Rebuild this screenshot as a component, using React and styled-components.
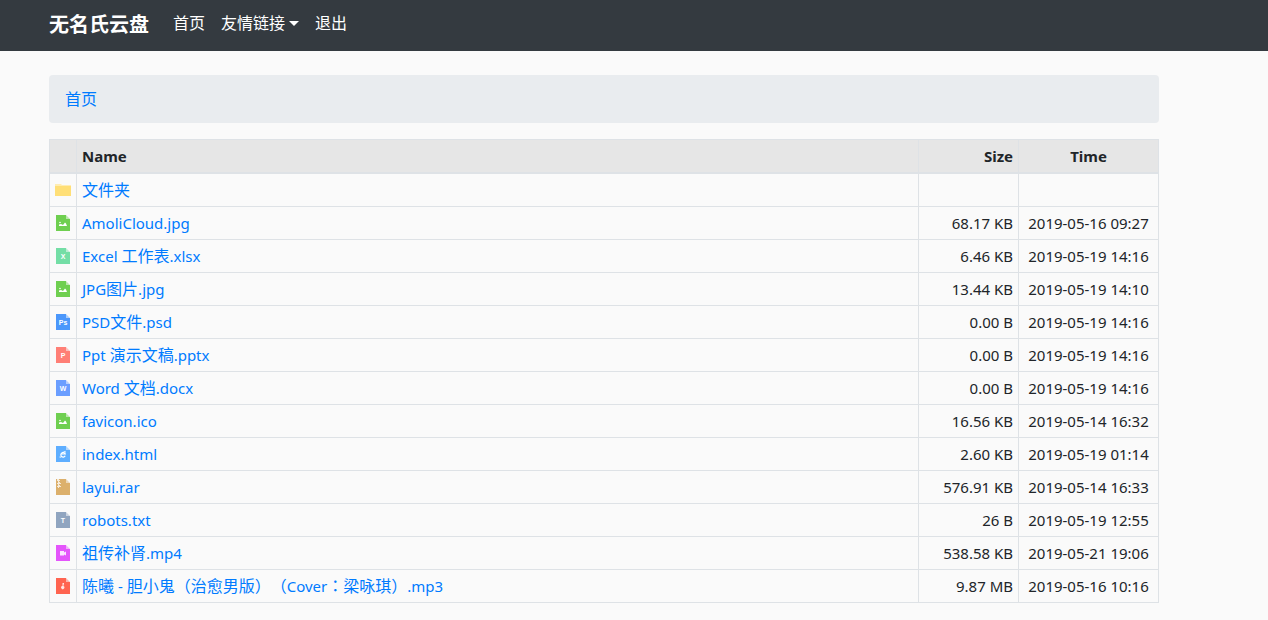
import React from "react";
import styled, { createGlobalStyle } from "styled-components";

const GlobalStyle = createGlobalStyle`
  *, *::before, *::after { box-sizing: border-box; }
  body {
    margin: 0;
    background: #fafafa;
    color: #212529;
    font-family: "Noto Sans", "Noto Sans CJK SC", sans-serif;
    font-size: 16px;
    line-height: 24px;
  }
`;

const Container = styled.div`
  max-width: 1159px;
  padding-left: 49px;
`;

const Navbar = styled.header`
  background: #343a40;
  padding: 3px 0 6px;
`;

const NavInner = styled(Container)`
  display: flex;
  align-items: flex-start;
`;

const Brand = styled.a`
  margin-right: 16px;
  padding-top: 2px;
  color: #fff;
  font-size: 20px;
  font-weight: 700;
  line-height: 40px;
  text-decoration: none;
`;

const NavList = styled.ul`
  display: flex;
  margin: 0;
  padding: 0;
  list-style: none;
`;

const NavLink = styled.a`
  display: flex;
  align-items: center;
  gap: 4px;
  padding: 8px;
  color: #fff;
  text-decoration: none;
`;

const Caret = styled.span`
  border: 5px solid transparent;
  border-top-color: #fff;
  border-bottom: 0;
`;

const Breadcrumb = styled.nav`
  margin: 24px 0 16px;
  padding: 12px 16px;
  border-radius: 4px;
  background: #e9ecef;
`;

const Link = styled.a`
  color: #007bff;
  text-decoration: none;
  &:hover { text-decoration: underline; }
`;

const Latin = styled.span`
  font-size: 15px;
`;

const Punctuation = styled.span`
  font-family: "Noto Sans CJK TC", sans-serif;
  line-height: 16px;
  text-spacing-trim: space-all;
`;

const Table = styled.table`
  width: 100%;
  table-layout: fixed;
  border-collapse: collapse;
`;

const Col = styled.col`
  width: ${(p) => p.$width || "auto"};
`;

const Head = styled.th`
  padding: 4px 5px;
  border: 1px solid #dee2e6;
  border-bottom-width: 2px;
  background: #e6e6e6;
  font-size: 15px;
  font-weight: 700;
  text-align: ${(p) => p.$align || "left"};
`;

const Cell = styled.td`
  height: 33px;
  padding: 4px 5px;
  border: 1px solid #dee2e6;
  font-size: ${(p) => (p.$data ? "15px" : "16px")};
  text-align: ${(p) => p.$align || "left"};
  white-space: nowrap;
`;

const Icon = styled.svg`
  display: block;
  width: 16px;
  height: 16px;
`;

const COLORS = {
  image: "#6fcf50",
  excel: "#74dea6",
  psd: "#4b97fb",
  ppt: "#ff7f76",
  word: "#6b9eff",
  html: "#5eaeff",
  rar: "#dcb06c",
  txt: "#90a5c0",
  video: "#e455fb",
  music: "#ff6450",
};

const LETTERS = { excel: "X", psd: "Ps", ppt: "P", word: "W", txt: "T" };

function Symbol({ type }) {
  if (LETTERS[type]) {
    return (
      <text x="8" y="11" fill="#fff" fontSize="7" fontWeight="700" textAnchor="middle" fontFamily="Liberation Sans, sans-serif">
        {LETTERS[type]}
      </text>
    );
  }
  if (type === "image") {
    return (
      <g fill="#fff">
        <circle cx="5" cy="7.500" r="0.8" />
        <path d="M4 11V9.500l2-0.500 2 1 2-2.500 1 1 1 2.500z" />
      </g>
    );
  }
  if (type === "html") {
    return (
      <g fill="none" stroke="#fff">
        <path d="M10.2 9.8A2.3 2.3 0 1 1 10.3 8H6" strokeWidth="1.2" />
        <path d="M5 10.5Q4 12 6.5 10.8M8.500 6Q11 4.500 10.500 6.500" strokeWidth="0.8" />
      </g>
    );
  }
  if (type === "rar") {
    return <path d="M2 0h2v1h1v1H4v1H3V2H2zM3 3h2v1h1v1H4v1H3V5H2V4h1zM3 6h2v1h1v1H4v1H3V8H2V7h1z" fill="#fff" fillOpacity="0.75" />;
  }
  if (type === "video") {
    return <path d="M5 6h4v1.500L11 6.500v4L9 9.500V10.500H5z" fill="#fff" fillOpacity="0.85" />;
  }
  return <path d="M7.500 5h1.500v1.500H8.500v1.500a1.700 1.700 0 1 1-1.500 0h.5z" fill="#fff" fillOpacity="0.85" />;
}

function FileIcon({ type }) {
  if (type === "folder") {
    return (
      <Icon viewBox="0 0 16 16" aria-hidden="true">
        <path d="M0 2h6l1 1h9v5H0z" fill="#ffedb3" />
        <path d="M0 4h16v10H0z" fill="#ffdf77" />
      </Icon>
    );
  }
  return (
    <Icon viewBox="0 0 16 16" aria-hidden="true">
      <path d="M1 0h10v4h4v12H1z" fill={COLORS[type]} />
      <path d="M11 0l4 4h-4z" fill={COLORS[type]} fillOpacity="0.45" />
      <Symbol type={type} />
    </Icon>
  );
}

function FileName({ name }) {
  return name.split(/([\x20-\x7e]+|[（）：]+)/).filter(Boolean).map((part, i) => {
    if (/^[\x20-\x7e]/.test(part)) return <Latin key={i}>{part}</Latin>;
    if (/^[（）：]/.test(part)) return <Punctuation key={i} lang="zh-TW">{part}</Punctuation>;
    return part;
  });
}

const FILES = [
  ["folder", "文件夹", "", ""],
  ["image", "AmoliCloud.jpg", "68.17 KB", "2019-05-16 09:27"],
  ["excel", "Excel 工作表.xlsx", "6.46 KB", "2019-05-19 14:16"],
  ["image", "JPG图片.jpg", "13.44 KB", "2019-05-19 14:10"],
  ["psd", "PSD文件.psd", "0.00 B", "2019-05-19 14:16"],
  ["ppt", "Ppt 演示文稿.pptx", "0.00 B", "2019-05-19 14:16"],
  ["word", "Word 文档.docx", "0.00 B", "2019-05-19 14:16"],
  ["image", "favicon.ico", "16.56 KB", "2019-05-14 16:32"],
  ["html", "index.html", "2.60 KB", "2019-05-19 01:14"],
  ["rar", "layui.rar", "576.91 KB", "2019-05-14 16:33"],
  ["txt", "robots.txt", "26 B", "2019-05-19 12:55"],
  ["video", "祖传补肾.mp4", "538.58 KB", "2019-05-21 19:06"],
  ["music", "陈曦 - 胆小鬼（治愈男版）（Cover：梁咏琪）.mp3", "9.87 MB", "2019-05-16 10:16"],
];

export default function App() {
  return (
    <div lang="zh-CN">
      <GlobalStyle />
      <Navbar>
        <NavInner>
          <Brand href="#">无名氏云盘</Brand>
          <nav>
            <NavList>
              <li><NavLink href="#">首页</NavLink></li>
              <li><NavLink href="#">友情链接<Caret /></NavLink></li>
              <li><NavLink href="#">退出</NavLink></li>
            </NavList>
          </nav>
        </NavInner>
      </Navbar>
      <Container as="main">
        <Breadcrumb><Link href="#">首页</Link></Breadcrumb>
        <Table>
          <colgroup>
            <Col $width="27px" />
            <Col />
            <Col $width="100px" />
            <Col $width="140px" />
          </colgroup>
          <thead>
            <tr>
              <Head />
              <Head>Name</Head>
              <Head $align="right">Size</Head>
              <Head $align="center">Time</Head>
            </tr>
          </thead>
          <tbody>
            {FILES.map(([type, name, size, time]) => (
              <tr key={name}>
                <Cell><FileIcon type={type} /></Cell>
                <Cell><Link href="#"><FileName name={name} /></Link></Cell>
                <Cell $data $align="right">{size}</Cell>
                <Cell $data $align="center">{time}</Cell>
              </tr>
            ))}
          </tbody>
        </Table>
      </Container>
    </div>
  );
}
